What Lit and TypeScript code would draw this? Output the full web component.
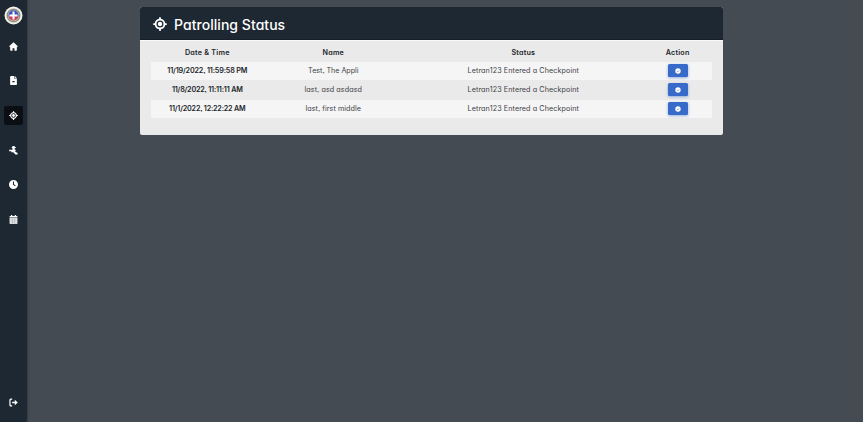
import { LitElement, html, css, svg } from "lit";
import { customElement } from "lit/decorators.js";
import { classMap } from "lit/directives/class-map.js";
import { styleMap } from "lit/directives/style-map.js";

const icons = {
  home: svg`<path d="M256 20L10 245q-8 28 22 30h34v175q0 42 42 42h92V350h112v142h92q42 0 42-42V275h34q30-2 22-30z"/>`,
  file: svg`<path fill-rule="evenodd" d="M64 48Q64 0 112 0h180v140h156v324q0 48-48 48H112q-48 0-48-48zM324 0l124 112H324zM190 290v70h130V290z"/>`,
  target: svg`<path fill-rule="evenodd" d="M256 0c18 0 32 14 32 32v35c83 14 147 78 160 157h32a32 32 0 0 1 0 64h-32c-13 83-77 147-160 160v32a32 32 0 0 1-64 0v-32C141 435 77 371 64 288H32a32 32 0 0 1 0-64h32C77 145 141 81 224 67V32c0-18 14-32 32-32zM128 256a128 128 0 1 0 256 0a128 128 0 1 0-256 0z"/><circle cx="256" cy="256" r="80"/>`,
  patrol: svg`<path d="M195 0h130v60h60v60h-60v100H195v-100h-40V60h40zM10 220h370v80h-70l180 100v90H370L240 350H130v-50H10z"/>`,
  clock: svg`<path fill-rule="evenodd" d="M256 0a256 256 0 1 1 0 512a256 256 0 1 1 0-512zM225 90v180l125 82 30-45-95-65V90z"/>`,
  calendar: svg`<path d="M110 0h75v50h142V0h75v50h40q40 0 40 40v50H30V90q0-40 40-40h40z"/><path d="M30 165h452v305q0 42-42 42H72q-42 0-42-42z" opacity=".85"/><path d="M165 200h35v280h-35zM312 200h35v280h-35z" fill="#1e2832" opacity=".35"/>`,
  logout: svg`<path d="M180 30v70h-62q-28 0-28 28v256q0 28 28 28h62v70h-70Q20 482 20 392V120q0-90 90-90zM330 100l170 156-170 156v-116H180v-80h150z"/>`,
};
type IconName = keyof typeof icons;
const icon = (name: IconName) =>
  html`<svg class="icon" viewBox="0 0 512 512">${icons[name]}</svg>`;

/* A label and the tracking that sets its width. */
type Label = [text: string, tracking: number];

const title: Label = ["Patrolling Status", 0.05];
const headings: Label[] = [["Date & Time", 0.24], ["Name", 0.18], ["Status", 0.2], ["Action", 0.22]];
const status: Label = ["Letran123 Entered a Checkpoint", 0.09];
const rows: Label[][] = [
  [["11/19/2022, 11:59:58 PM", -0.14], ["Test, The Appli", -0.03], status],
  [["11/8/2022, 11:11:11 AM", -0.18], ["last, asd asdasd", 0.09], status],
  [["11/1/2022, 12:22:22 AM", -0.18], ["last, first middle", 0.07], status],
];
const label = ([text, tracking]: Label) =>
  html`<span style=${styleMap({ letterSpacing: `${tracking}px` })}>${text}</span>`;

@customElement("app-root")
export class AppRoot extends LitElement {
  static styles = css`
    :host { display: flex; height: 422px; overflow: hidden; background: #444b52;
      font-family: Inter, "Noto Sans", sans-serif; font-feature-settings: "cv11", "ss03"; color: #212529; }
    * { box-sizing: border-box; }
    nav { width: 27px; flex: none; background: #1e2832; display: flex; flex-direction: column;
      align-items: center; padding-top: 6px; color: #fff; box-shadow: 0 0 2px #1e2832; }
    .seal { width: 19px; height: 19px; display: block; margin-bottom: 11.7px; }
    .item { width: 19px; height: 19px; border-radius: 2px; margin-bottom: 15.7px; flex: none;
      display: flex; align-items: center; justify-content: center; }
    .item.active { background: #0b0e13; }
    .icon { width: 9px; height: 9px; fill: currentColor; display: block; }
    .item:last-child { margin: auto 0 10px; }
    main { flex: 1; padding: 7px 0 0 113.3px; }
    .card { width: 582.7px; height: 127.7px; background: #eaeaea; border-radius: 2px; overflow: hidden; }
    header { height: 33px; background: #1e2832; color: #fff; display: flex; align-items: center;
      padding: 2px 0 0 13px; gap: 6.7px; font-size: 14px; font-weight: 500; border-bottom: 1px solid #17202a; }
    header .icon { width: 14px; height: 14px; margin-top: -1px; }
    .table { padding: 3px 11px 0; border-top: 1px solid #fafafa; font-size: 7.2px; }
    .row { display: grid; grid-template-columns: 112px 140px 240px 1fr; height: 19px;
      align-items: center; justify-items: center; white-space: nowrap; border-bottom: 1px solid #eaeaea; color: #3f4347; }
    .row.head { height: 18px; font-weight: 600; color: #212529; }
    .row.striped { background: #f5f5f5; }
    .row span:first-child { font-weight: 600; color: #212529; }
    .row:not(.head) span { margin-top: -0.4px; }
    button { width: 20px; height: 13px; border: 0; padding: 0; margin-top: -1px; border-radius: 1.5px; background: #386bc9;
      display: flex; align-items: center; justify-content: center; box-shadow: 0 1px 3px #386bc980; }
    .check { width: 6px; height: 6px; display: block; }
  `;

  render() {
    const items: IconName[] = ["home", "file", "target", "patrol", "clock", "calendar", "logout"];
    return html`
      <nav>
        <svg class="seal" viewBox="0 0 38 38">
          <circle cx="19" cy="19" r="18" fill="#f4f2ed" />
          <circle cx="19" cy="19" r="12.5" fill="#d5d2bf" stroke="#8f9478" stroke-width="3" />
          <circle cx="19" cy="18.5" r="10" fill="#3e55c5" />
          <path d="M9.500 20h19q-1 8-9.500 9q-8.500-1-9.500-9z" fill="#cc3e5d" />
          <path d="M17 11h4v6h6v4h-6v6h-4v-6h-6v-4h6z" fill="#fff" />
        </svg>
        ${items.map((n) => html`<div class=${classMap({ item: true, active: n === "target" })}>${icon(n)}</div>`)}
      </nav>
      <main>
        <section class="card">
          <header>${icon("target")}${label(title)}</header>
          <div class="table">
            <div class="row head">${headings.map(label)}</div>
            ${rows.map((r, i) => html`<div class=${classMap({ row: true, striped: i % 2 === 0 })}>
              ${r.map(label)}
              <button aria-label="Confirm">
                <svg class="check" viewBox="0 0 12 12">
                  <circle cx="6" cy="6" r="5.400" fill="#fff" />
                  <path d="M4 6.200l1.500 1.500 2.800-3" fill="none" stroke="#386bc9" stroke-width="1.200" />
                </svg>
              </button>
            </div>`)}
          </div>
        </section>
      </main>
    `;
  }
}
